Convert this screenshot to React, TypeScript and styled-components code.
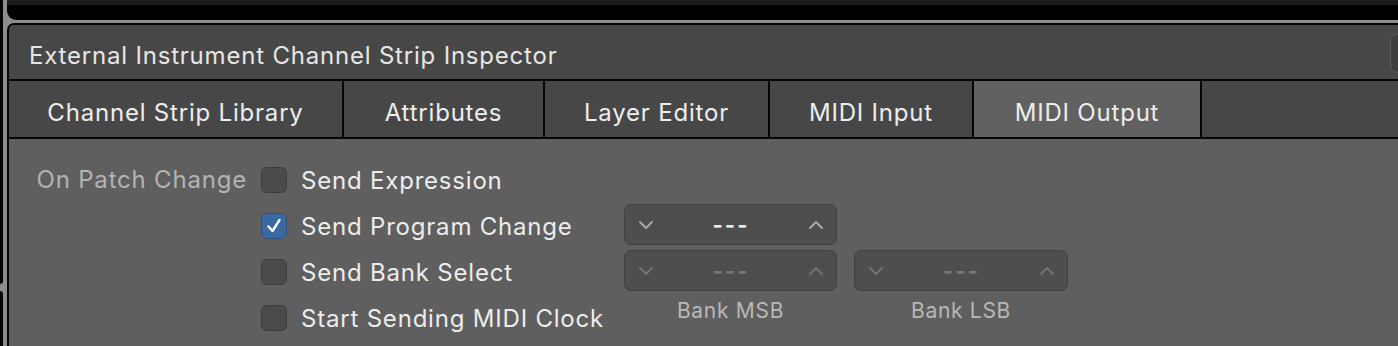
import styled, { createGlobalStyle } from "styled-components"

const GlobalStyle = createGlobalStyle`
    html, body {
        margin: 0;
        padding: 0;
        background: #8d8d8d;
    }
    body {
        font-family: Inter, "Liberation Sans", sans-serif;
        -webkit-font-smoothing: antialiased;
    }
`

type TabInfo = { label: string, width: number, active?: boolean }

const tabs: TabInfo[] = [
    { label: 'Channel Strip Library', width: 335 },
    { label: 'Attributes', width: 201 },
    { label: 'Layer Editor', width: 225 },
    { label: 'MIDI Input', width: 204 },
    { label: 'MIDI Output', width: 228, active: true },
]

const options = [
    { label: 'Send Expression', checked: false },
    { label: 'Send Program Change', checked: true },
    { label: 'Send Bank Select', checked: false },
    { label: 'Start Sending MIDI Clock', checked: false },
]

function Chevron({ up }: { up?: boolean }) {
    return (
        <svg width="16" height="10" viewBox="0 0 16 10">
            <polyline
                points={up ? '2,8 8,2 14,8' : '2,2 8,8 14,2'}
                fill="none"
                stroke="currentColor"
                strokeWidth="2"
                strokeLinecap="round"
                strokeLinejoin="round"
            />
        </svg>
    )
}

function Stepper({ dim }: { dim?: boolean }) {
    return (
        <StyledStepper $dim={dim}>
            <Chevron />
            <span className="value">---</span>
            <Chevron up />
        </StyledStepper>
    )
}

function CheckBox({ checked }: { checked: boolean }) {
    return (
        <StyledCheck $checked={checked}>
            {checked && (
                <svg width="18" height="18" viewBox="0 0 18 18">
                    <polyline
                        points="3.5,9.5 7.5,14 14.5,3"
                        fill="none"
                        stroke="#ffffff"
                        strokeWidth="2.4"
                        strokeLinecap="round"
                        strokeLinejoin="round"
                    />
                </svg>
            )}
        </StyledCheck>
    )
}

function App() {
    return (
        <>
            <GlobalStyle />
            <Screen>
                <LeftRail>
                    <div className="upper" />
                    <div className="lower" />
                </LeftRail>
                <MainColumn>
                    <TopBar />
                    <Inspector>
                        <Header>
                            <span className="title">External Instrument Channel Strip Inspector</span>
                            <CornerButton />
                        </Header>
                        <TabBar>
                            {tabs.map(tab => (
                                <Tab key={tab.label} $width={tab.width} $active={tab.active}>
                                    {tab.label}
                                </Tab>
                            ))}
                        </TabBar>
                        <Body>
                            <SectionLabel>On Patch Change</SectionLabel>
                            <OptionList>
                                {options.map(opt => (
                                    <OptionRow key={opt.label}>
                                        <CheckBox checked={opt.checked} />
                                        <span>{opt.label}</span>
                                    </OptionRow>
                                ))}
                            </OptionList>
                            <StepperGrid>
                                <Stepper />
                                <span />
                                <Stepper dim />
                                <Stepper dim />
                                <Caption>Bank MSB</Caption>
                                <Caption>Bank LSB</Caption>
                            </StepperGrid>
                        </Body>
                    </Inspector>
                </MainColumn>
            </Screen>
        </>
    )
}

const Screen = styled.div`
    width: 1398px;
    height: 346px;
    display: flex;
    gap: 4px;
    overflow: hidden;
    background: #8d8d8d;
`

const LeftRail = styled.div`
    width: 3px;
    display: flex;
    flex-direction: column;
    gap: 7px;
    & .upper {
        height: 284px;
        background: #050505;
        border-bottom-right-radius: 3px;
    }
    & .lower {
        flex: 1;
        background: #050505;
        border-top-right-radius: 3px;
    }
`

const MainColumn = styled.div`
    flex: 1;
    min-width: 0;
    display: flex;
    flex-direction: column;
    gap: 3px;
`

const TopBar = styled.div`
    height: 15px;
    background: #000000;
    border-top: 5px solid #1d1d1d;
    border-bottom-left-radius: 9px;
`

const Inspector = styled.div`
    flex: 1;
    display: flex;
    flex-direction: column;
    border-top: 2px solid #050505;
    border-left: 2px solid #050505;
    border-top-left-radius: 7px;
    overflow: hidden;
    background: #5f5f5f;
`

const Header = styled.div`
    height: 54px;
    display: flex;
    align-items: center;
    background: #474747;
    border-bottom: 2px solid #050505;
    padding-left: 20px;
    & .title {
        flex: 1;
        color: #e6e6e6;
        font-size: 24px;
        letter-spacing: 0.8px;
        padding-top: 6px;
        white-space: nowrap;
    }
`

const CornerButton = styled.div`
    width: 40px;
    height: 38px;
    margin-right: -34px;
    margin-top: 2px;
    background: #3f3f3f;
    border: 1px solid #5b5b5b;
    border-radius: 8px;
`

const TabBar = styled.div`
    height: 56px;
    display: flex;
    background: #474747;
    border-bottom: 2px solid #050505;
`

const Tab = styled.div<{ $width: number, $active?: boolean }>`
    width: ${({ $width }) => $width}px;
    box-sizing: border-box;
    display: flex;
    align-items: center;
    justify-content: center;
    padding-top: 6px;
    border-right: 2px solid #050505;
    background: ${({ $active }) => $active ? '#616161' : '#474747'};
    color: #ededed;
    font-size: 24px;
    letter-spacing: 0.8px;
    white-space: nowrap;
`

const Body = styled.div`
    flex: 1;
    display: flex;
    align-items: flex-start;
    padding-top: 18px;
`

const SectionLabel = styled.div`
    width: 238px;
    margin-right: 14px;
    text-align: right;
    line-height: 46px;
    color: #b3b3b3;
    font-size: 24px;
    letter-spacing: 0.8px;
    white-space: nowrap;
`

const OptionList = styled.div`
    width: 363px;
    display: flex;
    flex-direction: column;
`

const OptionRow = styled.div`
    height: 46px;
    display: flex;
    align-items: center;
    gap: 14px;
    color: #ececec;
    font-size: 24px;
    letter-spacing: 0.8px;
    white-space: nowrap;
    & > span {
        padding-top: 1px;
    }
`

const StyledCheck = styled.div<{ $checked: boolean }>`
    width: 26px;
    height: 26px;
    box-sizing: border-box;
    border-radius: 6px;
    display: flex;
    align-items: center;
    justify-content: center;
    background: ${({ $checked }) => $checked ? '#3a68a0' : '#4b4b4b'};
    border: 1px solid ${({ $checked }) => $checked ? '#2f4f78' : '#3c3c3c'};
`

const StepperGrid = styled.div`
    margin-top: 47px;
    display: grid;
    grid-template-columns: 213px 214px;
    column-gap: 17px;
    row-gap: 5px;
`

const StyledStepper = styled.div<{ $dim?: boolean }>`
    height: 41px;
    box-sizing: border-box;
    display: flex;
    align-items: center;
    justify-content: space-between;
    padding: 0 12px 0 13px;
    background: #4e4e4e;
    border: 1px solid #404040;
    border-radius: 7px;
    color: ${({ $dim }) => $dim ? '#747474' : '#a9a9a9'};
    & .value {
        color: ${({ $dim }) => $dim ? '#787878' : '#ececec'};
        font-size: 22px;
        font-weight: 700;
        letter-spacing: 2px;
    }
`

const Caption = styled.div`
    text-align: center;
    color: #b8b8b8;
    font-size: 21px;
    letter-spacing: 0.7px;
    padding-top: 2px;
`

export default App
